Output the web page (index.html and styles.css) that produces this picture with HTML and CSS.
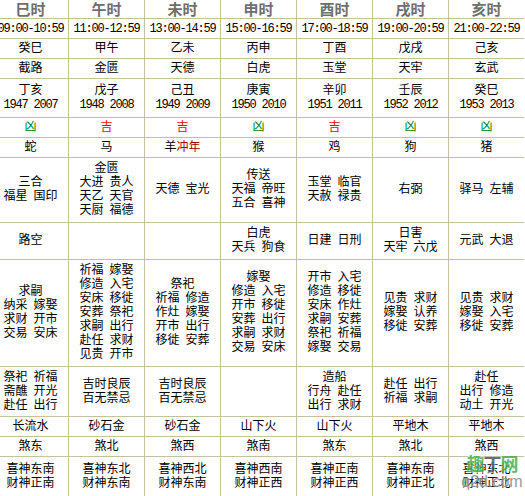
FILE: index.html
```html
<!DOCTYPE html>
<html lang="zh-CN">
<head>
<meta charset="utf-8">
<title>时辰吉凶</title>
<link rel="stylesheet" href="styles.css">
</head>
<body>
<div class="page">
  <div class="almanac">
    <div class="c hd">巳时</div>
    <div class="c hd">午时</div>
    <div class="c hd">未时</div>
    <div class="c hd">申时</div>
    <div class="c hd">酉时</div>
    <div class="c hd">戌时</div>
    <div class="c hd">亥时</div>

    <div class="c num">09:00-10:59</div>
    <div class="c num">11:00-12:59</div>
    <div class="c num">13:00-14:59</div>
    <div class="c num">15:00-16:59</div>
    <div class="c num">17:00-18:59</div>
    <div class="c num">19:00-20:59</div>
    <div class="c num">21:00-22:59</div>

    <div class="c">癸巳</div>
    <div class="c">甲午</div>
    <div class="c">乙未</div>
    <div class="c">丙申</div>
    <div class="c">丁酉</div>
    <div class="c">戊戌</div>
    <div class="c">己亥</div>

    <div class="c">截路</div>
    <div class="c">金匮</div>
    <div class="c">天德</div>
    <div class="c">白虎</div>
    <div class="c">玉堂</div>
    <div class="c">天牢</div>
    <div class="c">玄武</div>

    <div class="c"><p>丁亥<br><span class="num">1947 2007</span></p></div>
    <div class="c"><p>戊子<br><span class="num">1948 2008</span></p></div>
    <div class="c"><p>己丑<br><span class="num">1949 2009</span></p></div>
    <div class="c"><p>庚寅<br><span class="num">1950 2010</span></p></div>
    <div class="c"><p>辛卯<br><span class="num">1951 2011</span></p></div>
    <div class="c"><p>壬辰<br><span class="num">1952 2012</span></p></div>
    <div class="c"><p>癸巳<br><span class="num">1953 2013</span></p></div>

    <div class="c bad">凶</div>
    <div class="c good">吉</div>
    <div class="c good">吉</div>
    <div class="c bad">凶</div>
    <div class="c good">吉</div>
    <div class="c bad">凶</div>
    <div class="c bad">凶</div>

    <div class="c">蛇</div>
    <div class="c">马</div>
    <div class="c"><p>羊<span class="clash">冲年</span></p></div>
    <div class="c">猴</div>
    <div class="c">鸡</div>
    <div class="c">狗</div>
    <div class="c">猪</div>

    <div class="c"><p>三合<br>福星 国印</p></div>
    <div class="c"><p>金匮<br>大进 贵人<br>天乙 天官<br>天厨 福德</p></div>
    <div class="c"><p>天德 宝光</p></div>
    <div class="c"><p>传送<br>天福 帝旺<br>五合 喜神</p></div>
    <div class="c"><p>玉堂 临官<br>天赦 禄贵</p></div>
    <div class="c"><p>右弼</p></div>
    <div class="c"><p>驿马 左辅</p></div>

    <div class="c"><p>路空</p></div>
    <div class="c"></div>
    <div class="c"></div>
    <div class="c"><p>白虎<br>天兵 狗食</p></div>
    <div class="c"><p>日建 日刑</p></div>
    <div class="c"><p>日害<br>天牢 六戊</p></div>
    <div class="c"><p>元武 大退</p></div>

    <div class="c"><p>求嗣<br>纳采 嫁娶<br>求财 开市<br>交易 安床</p></div>
    <div class="c"><p>祈福 嫁娶<br>修造 入宅<br>安床 移徙<br>安葬 祭祀<br>求嗣 出行<br>赴任 求财<br>见贵 开市</p></div>
    <div class="c"><p>祭祀<br>祈福 修造<br>作灶 嫁娶<br>开市 出行<br>移徙 安葬</p></div>
    <div class="c"><p>嫁娶<br>修造 入宅<br>开市 移徙<br>安葬 出行<br>求嗣 求财<br>交易 安床</p></div>
    <div class="c"><p>开市 入宅<br>修造 移徙<br>安床 作灶<br>求嗣 安葬<br>祭祀 祈福<br>嫁娶 交易</p></div>
    <div class="c"><p>见贵 求财<br>嫁娶 认养<br>移徙 安葬</p></div>
    <div class="c"><p>见贵 求财<br>嫁娶 入宅<br>移徙 安葬</p></div>

    <div class="c"><p>祭祀 祈福<br>斋醮 开光<br>赴任 出行</p></div>
    <div class="c"><p>吉时良辰<br>百无禁忌</p></div>
    <div class="c"><p>吉时良辰<br>百无禁忌</p></div>
    <div class="c"></div>
    <div class="c"><p>造船<br>行舟 赴任<br>出行 求财</p></div>
    <div class="c"><p>赴任 出行<br>祈福 求嗣</p></div>
    <div class="c"><p>赴任<br>出行 修造<br>动土 开光</p></div>

    <div class="c">长流水</div>
    <div class="c">砂石金</div>
    <div class="c">砂石金</div>
    <div class="c">山下火</div>
    <div class="c">山下火</div>
    <div class="c">平地木</div>
    <div class="c">平地木</div>

    <div class="c">煞东</div>
    <div class="c">煞北</div>
    <div class="c">煞西</div>
    <div class="c">煞南</div>
    <div class="c">煞东</div>
    <div class="c">煞北</div>
    <div class="c">煞西</div>

    <div class="c"><p>喜神东南<br>财神正南</p></div>
    <div class="c"><p>喜神东北<br>财神东南</p></div>
    <div class="c"><p>喜神西北<br>财神东南</p></div>
    <div class="c"><p>喜神西南<br>财神正西</p></div>
    <div class="c"><p>喜神正南<br>财神正西</p></div>
    <div class="c"><p>喜神东南<br>财神正北</p></div>
    <div class="c"><p>喜神东北<br>财神正北</p></div>
  </div>

  <div class="watermark">
    <div class="wm-cn"><span class="g">趣</span><span class="d">丁</span><span class="g">网</span></div>
    <div class="wm-en">q2d.com</div>
  </div>
</div>
</body>
</html>
```
FILE: styles.css
```css
html, body {
  margin: 0;
  padding: 0;
  background: #fff;
}

.page {
  position: relative;
  width: 525px;
  height: 496px;
  overflow: hidden;
}

.almanac {
  display: grid;
  grid-template-columns: repeat(7, 75px);
  grid-template-rows: 18px 19px 19px 19px 38px 19px 19px 64px 36px 106px 49px 19px 19px 40px;
  gap: 1px;
  width: 531px;
  margin-left: -7px;
  padding-bottom: 1px;
  background: #c2c29c;
  font-family: "Liberation Mono", "Noto Sans CJK SC", monospace;
  font-size: 12px;
  line-height: 14px;
  color: #000;
  word-spacing: -1.2px;
}

.c {
  background: #fff;
  display: flex;
  align-items: center;
  justify-content: center;
  text-align: center;
  white-space: nowrap;
}

.c p {
  margin: 0;
}

.hd {
  font-family: "Noto Sans CJK SC", sans-serif;
  font-size: 15px;
  font-weight: bold;
  line-height: 18px;
  color: #6e6e6e;
  word-spacing: 0;
}

.num {
  letter-spacing: -1.2px;
  word-spacing: 0;
}

.good {
  color: #ff0000;
}

.bad {
  color: #008000;
}

.clash {
  color: #a00000;
}

.watermark {
  position: absolute;
  left: 460px;
  top: 452px;
  width: 64px;
  opacity: 0.85;
  text-align: center;
}

.wm-cn {
  font-family: "Noto Sans CJK SC", sans-serif;
  font-size: 18px;
  font-weight: bold;
  line-height: 22px;
  letter-spacing: -1px;
  text-shadow: 0 0 2px #fff, 0 0 2px #fff;
}

.wm-cn .g {
  color: #4cae4c;
}

.wm-cn .d {
  color: #555;
}

.wm-en {
  font-family: "Liberation Sans", sans-serif;
  font-size: 16px;
  line-height: 16px;
  color: #8a8a8a;
  text-shadow: 0 0 2px #fff;
}
```
